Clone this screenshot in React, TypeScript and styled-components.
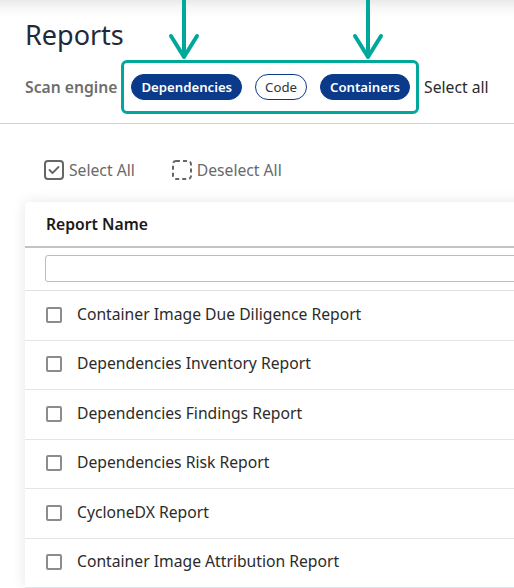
import React from 'react';
import styled, { createGlobalStyle } from 'styled-components';

const GlobalStyle = createGlobalStyle`
  html, body {
    margin: 0;
    padding: 0;
    background: #ffffff;
    overflow: hidden;
  }
  body {
    font-family: 'Noto Sans', 'Open Sans', sans-serif;
    color: #2b2b2b;
  }
`;

const Page = styled.div`
  position: relative;
  width: 514px;
  height: 588px;
  overflow: hidden;
  background: linear-gradient(#e9e9e9 0px, #f7f7f7 8px, #ffffff 18px);
`;

const Header = styled.div`
  padding: 16px 0 9px 25px;
  border-bottom: 1px solid #d3d3d3;
`;

const Title = styled.h1`
  margin: 0;
  font-size: 27px;
  line-height: 38px;
  font-weight: 400;
  color: #1e2a3b;
`;

const ScanRow = styled.div`
  display: flex;
  align-items: center;
  margin-top: 6px;
`;

const ScanLabel = styled.span`
  font-size: 15.7px;
  font-weight: 600;
  color: #6e6e6e;
  margin-right: 4px;
`;

const Highlight = styled.div`
  display: flex;
  align-items: center;
  gap: 13px;
  height: 48px;
  padding: 0 6px 0 7px;
  border: 3px solid #00a89c;
  border-radius: 6px;
`;

const Pill = styled.span<{ $active?: boolean }>`
  display: inline-flex;
  align-items: center;
  height: 26px;
  box-sizing: border-box;
  padding: 0 9px;
  border-radius: 13px;
  font-size: 13.2px;
  font-weight: ${(p) => (p.$active ? 600 : 400)};
  background: ${(p) => (p.$active ? '#0b3a8b' : '#ffffff')};
  color: ${(p) => (p.$active ? '#ffffff' : '#2f3440')};
  border: 1px solid #0b3a8b;
`;

const SelectAllLink = styled.span`
  margin-left: 5px;
  font-size: 15.7px;
  color: #2b2b2b;
`;

const Arrows = styled.svg`
  position: absolute;
  left: 0;
  top: 0;
`;

const Toolbar = styled.div`
  display: flex;
  align-items: center;
  gap: 37px;
  height: 20px;
  margin: 36px 0 22px 44px;
`;

const ToolButton = styled.span`
  display: inline-flex;
  align-items: center;
  gap: 5px;
  height: 20px;
  line-height: 20px;
  font-size: 15.7px;
  color: #6a6a6a;
`;

const Card = styled.div`
  margin-left: 25px;
  margin-right: -30px;
  background: #ffffff;
  border-radius: 4px 0 0 0;
  box-shadow: 0 0 14px rgba(0, 0, 0, 0.1);
`;

const HeadCell = styled.div`
  height: 44px;
  display: flex;
  align-items: center;
  padding-left: 21px;
  font-size: 15.7px;
  font-weight: 600;
  color: #1a1a1a;
  border-bottom: 2px solid #c3c3c7;
`;

const FilterCell = styled.div`
  padding: 7px 0 8px 20px;
  border-bottom: 1px solid #dde0e5;
`;

const FilterInput = styled.input`
  display: block;
  width: 100%;
  height: 27px;
  box-sizing: border-box;
  border: 1px solid #b9bcc2;
  border-radius: 3px;
  outline: none;
`;

const Row = styled.div`
  box-sizing: border-box;
  height: 49.5px;
  display: flex;
  align-items: center;
  gap: 15px;
  padding: 0 0 1px 21px;
  border-bottom: 1px solid #e2e5ea;
  font-size: 15.7px;
  line-height: 1;
  color: #2b2b2b;
`;

const Box = styled.span`
  width: 16px;
  height: 16px;
  box-sizing: border-box;
  border: 2px solid #8c8c8c;
  border-radius: 2px;
  flex-shrink: 0;
`;

const reports = [
  'Container Image Due Diligence Report',
  'Dependencies Inventory Report',
  'Dependencies Findings Report',
  'Dependencies Risk Report',
  'CycloneDX Report',
  'Container Image Attribution Report',
];

const Arrow = ({ x }: { x: number }) => (
  <g stroke="#00a89c" strokeWidth="4" fill="none" strokeLinecap="round">
    <line x1={x} y1={-2} x2={x} y2={56} />
    <polyline points={`${x - 13},36 ${x},57 ${x + 13},36`} strokeLinejoin="round" />
  </g>
);

export default function App() {
  return (
    <Page>
      <GlobalStyle />
      <Header>
        <Title>Reports</Title>
        <ScanRow>
          <ScanLabel>Scan engine</ScanLabel>
          <Highlight>
            <Pill $active>Dependencies</Pill>
            <Pill>Code</Pill>
            <Pill $active>Containers</Pill>
          </Highlight>
          <SelectAllLink>Select all</SelectAllLink>
        </ScanRow>
      </Header>
      <Toolbar>
        <ToolButton>
          <svg width="20" height="20" viewBox="0 0 20 20">
            <rect x="1" y="1" width="18" height="18" rx="3" fill="none" stroke="#666" strokeWidth="2" />
            <polyline points="5.5,10 8.5,13 14.5,7" fill="none" stroke="#666" strokeWidth="1.8" strokeLinecap="round" strokeLinejoin="round" />
          </svg>
          Select All
        </ToolButton>
        <ToolButton>
          <svg width="20" height="20" viewBox="0 0 20 20">
            <rect x="1" y="1" width="18" height="18" rx="3" fill="none" stroke="#666" strokeWidth="2" strokeDasharray="4 3" />
          </svg>
          Deselect All
        </ToolButton>
      </Toolbar>
      <Card>
        <HeadCell>Report Name</HeadCell>
        <FilterCell>
          <FilterInput />
        </FilterCell>
        {reports.map((r) => (
          <Row key={r}>
            <Box />
            {r}
          </Row>
        ))}
      </Card>
      <Arrows width="514" height="62" viewBox="0 0 514 62">
        <Arrow x={184} />
        <Arrow x={368} />
      </Arrows>
    </Page>
  );
}
